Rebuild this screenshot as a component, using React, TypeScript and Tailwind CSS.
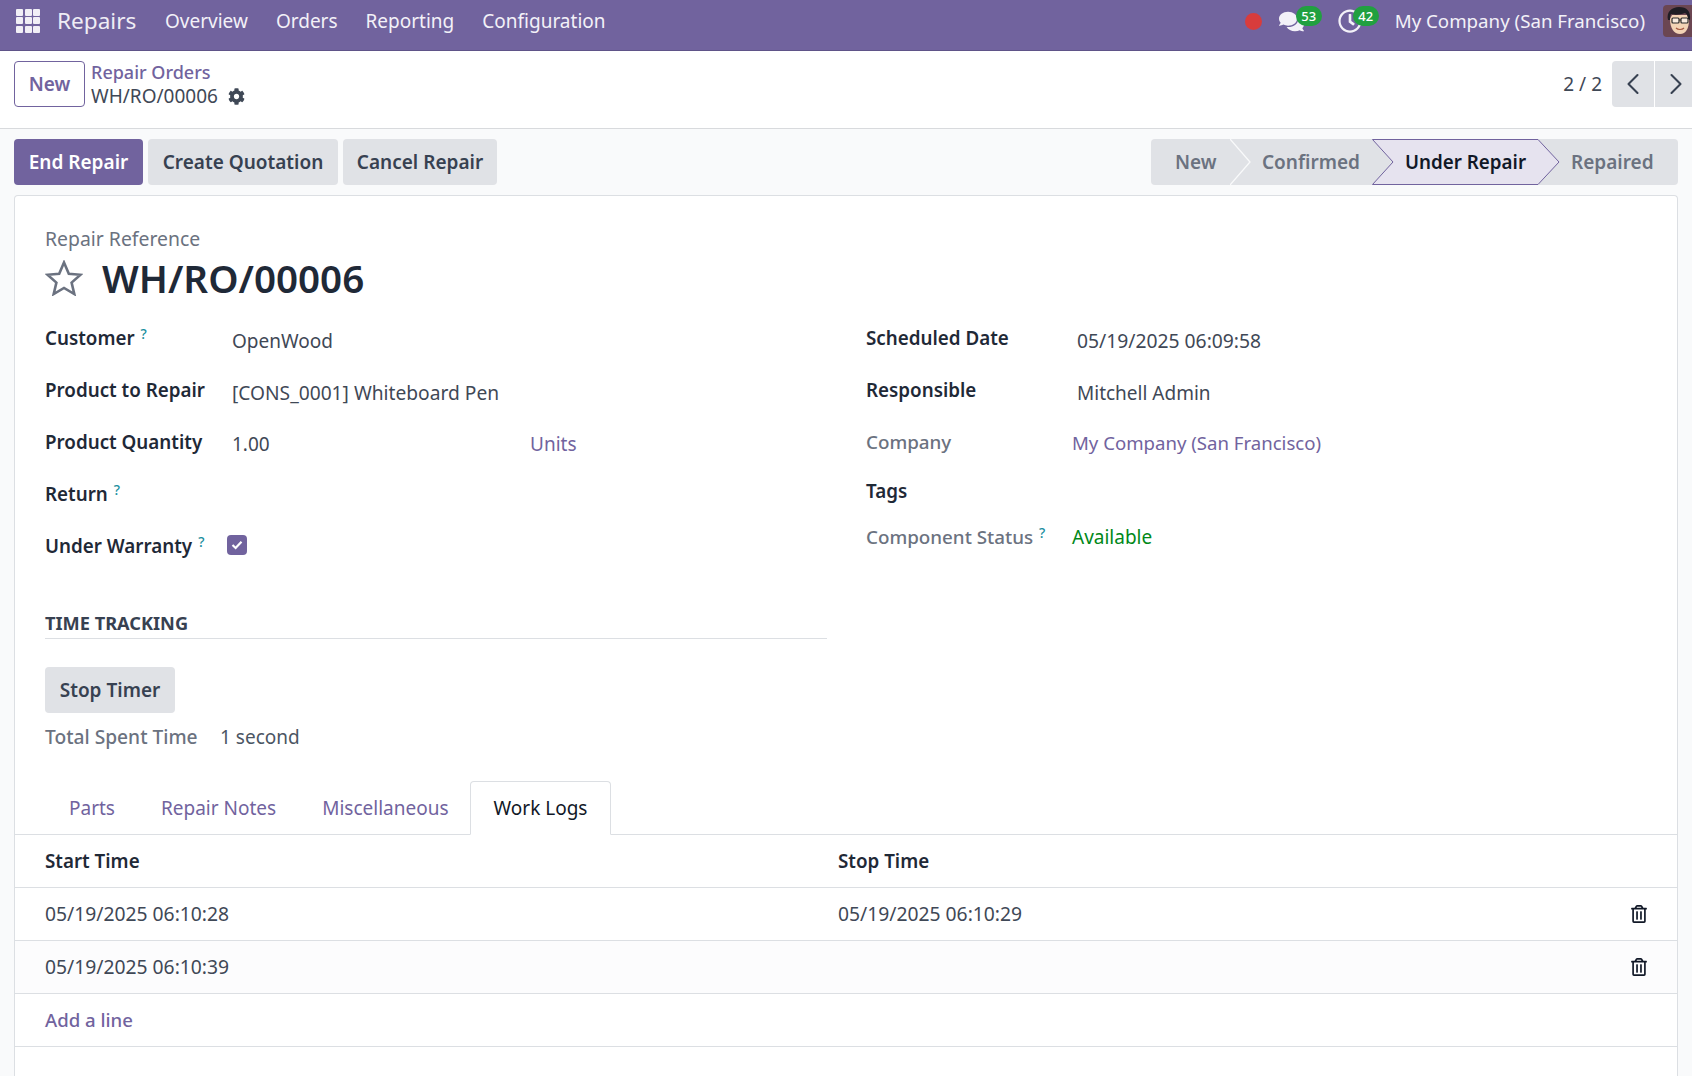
import type { ReactNode } from "react";
import { FaCog, FaComments, FaRegClock, FaRegTrashAlt } from "react-icons/fa";
import { ChevronLeft, ChevronRight } from "lucide-react";

function Help() {
  return <sup className="ml-[6px] text-[14px] font-medium text-[#1b8fa0] leading-none relative -top-[6px] align-baseline">?</sup>;
}

function Apps() {
  return (
    <div className="grid grid-cols-3 gap-[1.5px] w-[24px] h-[24px]">
      {Array.from({ length: 9 }).map((_, i) => (
        <div key={i} className="bg-[#f1eff6] rounded-[1px]" />
      ))}
    </div>
  );
}

function Avatar() {
  return (
    <svg width="32" height="32" viewBox="0 0 32 32" className="rounded-[4px] shrink-0">
      <rect width="32" height="32" fill="#6b4652" />
      <path d="M7 14c0 9 4 15 10 15s9-6 9-14l-2-5H9z" fill="#f3d3b5" />
      <path d="M5 15C3 7 9 2 16 2c8 0 12 4 11 13l-2-1c0-3-1-5-3-6-5 2-11 2-14 1-1 2-1 4-1 6z" fill="#1f1d24" />
      <rect x="9" y="13" width="7" height="5" rx="1" fill="#fff" fillOpacity=".55" stroke="#2a2a2a" strokeWidth="1.2" />
      <rect x="18" y="13" width="7" height="5" rx="1" fill="#fff" fillOpacity=".55" stroke="#2a2a2a" strokeWidth="1.2" />
      <path d="M16 15h2" stroke="#2a2a2a" strokeWidth="1.2" />
      <path d="M13 23c2 2 6 2 8 0" stroke="#a5573f" strokeWidth="1.2" fill="none" />
    </svg>
  );
}

function Badge({ n, cls }: { n: string; cls: string }) {
  return (
    <span className={`absolute ${cls} h-[20px] w-[26px] rounded-full bg-[#21a040] text-white text-[13px] leading-[20px] text-center font-medium`}>{n}</span>
  );
}

function NavBar() {
  return (
    <header className="h-[51px] bg-[#71639e] border-b border-[#5f5488] flex items-center justify-between pl-[16px] pb-[8px] text-[#f3f1f8] overflow-hidden shrink-0">
      <div className="flex items-center">
        <Apps />
        <span className="ml-[17px] text-[22.6px] text-[#efedf5] w-[108px]">Repairs</span>
        <nav className="flex items-center gap-[28px] text-[19px]">
          <span>Overview</span>
          <span>Orders</span>
          <span>Reporting</span>
          <span>Configuration</span>
        </nav>
      </div>
      <div className="flex items-center -mr-[3px]">
        <span className="w-[17px] h-[17px] rounded-full bg-[#d83c3c]" />
        <span className="relative ml-[17px] w-[28px] h-[28px] flex items-center">
          <FaComments className="text-[25px] text-[#f3f1f8]" />
          <Badge n="53" cls="left-[17px] -top-[1px]" />
        </span>
        <span className="relative ml-[31px] w-[26px] h-[28px] flex items-center">
          <FaRegClock className="text-[24px] text-[#f3f1f8]" />
          <Badge n="42" cls="left-[15px] -top-[1px]" />
        </span>
        <span className="ml-[31px] text-[18.7px] whitespace-nowrap">My Company (San Francisco)</span>
        <span className="ml-[18px]"><Avatar /></span>
      </div>
    </header>
  );
}

function ControlPanel() {
  return (
    <div className="h-[78px] bg-white border-b border-[#d8dadd] flex items-center justify-between pl-[14px] pb-[11px] shrink-0 overflow-hidden">
      <div className="flex items-center">
        <button className="w-[71px] h-[46px] rounded-[4px] border border-[#71639e] text-[#71639e] text-[19px] font-semibold bg-white">New</button>
        <div className="ml-[6px] flex flex-col text-[19px] leading-[24px]">
          <span className="text-[#71639e] font-medium text-[18px]">Repair Orders</span>
          <span className="flex items-center text-[#3f4856]">
            WH/RO/00006
            <FaCog className="ml-[10px] text-[17px] text-[#3f4856]" />
          </span>
        </div>
      </div>
      <div className="flex items-center -mr-[4px]">
        <span className="text-[19px] text-[#3f4856] mr-[10px]">2 / 2</span>
        <button className="w-[42px] h-[46px] bg-[#e0e2e6] rounded-l-[4px] flex items-center justify-center text-[#374151]"><ChevronLeft size={36} strokeWidth={1.4} /></button>
        <button className="ml-[1px] w-[41px] h-[46px] bg-[#e0e2e6] flex items-center justify-center text-[#374151]"><ChevronRight size={36} strokeWidth={1.4} /></button>
      </div>
    </div>
  );
}

function ActionBar() {
  const b = "h-[46px] rounded-[4px] text-[19px] font-semibold";
  return (
    <div className="mt-[10px] flex items-center justify-between">
      <div className="flex gap-[5px]">
        <button className={`${b} w-[129px] bg-[#71639e] text-white`}>End Repair</button>
        <button className={`${b} w-[190px] bg-[#e0e2e6] text-[#374151]`}>Create Quotation</button>
        <button className={`${b} w-[154px] bg-[#e0e2e6] text-[#374151]`}>Cancel Repair</button>
      </div>
      <div className="flex h-[46px] w-[527px] rounded-[4px] bg-[#e0e2e6] text-[19px] font-semibold text-[#6b7280]">
        <div className="relative w-[79px] pl-[24px] flex items-center">
          New
          <svg className="absolute left-[79px] top-0" width="22" height="46" viewBox="0 0 22 46" fill="none"><path d="M0 0 L20 23 L0 46" stroke="#f9fafb" strokeWidth="1.3" /></svg>
        </div>
        <div className="w-[142px] pl-[32px] flex items-center">Confirmed</div>
        <div className="relative w-[166px] pl-[33px] flex items-center text-[#111827]">
          <svg className="absolute left-0 top-0" width="188" height="46" viewBox="0 0 188 46" fill="none">
            <path d="M0.5 0.5 H166 L187 23 L166 45.5 H0.5 L21 23 Z" fill="#e6e3ef" stroke="#71639e" strokeWidth="1" />
          </svg>
          <span className="relative text-[18.8px]">Under Repair</span>
        </div>
        <div className="pl-[33px] flex items-center">Repaired</div>
      </div>
    </div>
  );
}

function Label({ children, muted, w }: { children: ReactNode; muted?: boolean; w: string }) {
  return <div className={`${w} shrink-0 text-[18.8px] ${muted ? "font-medium text-[#6b7280]" : "font-semibold text-[#1f2937]"}`}>{children}</div>;
}

function Sheet() {
  const lw = "w-[187px]";
  const rw = "w-[206px]";
  return (
    <section className="mt-[10px] flex-1 bg-white border border-[#dcdfe3] border-b-0 rounded-t-[4px] text-[19px] leading-[24px] text-[#3f4856]">
      <div className="pl-[30px] pt-[31px]">
        <div className="text-[#6b7280] text-[19.4px]">Repair Reference</div>
        <div className="mt-[3px] flex items-center h-[48px]">
          <svg width="38" height="36" viewBox="0 0 38 36" fill="none" className="shrink-0">
            <path d="M19 2.5 L23.8 13.8 L35.5 14.8 L26.6 22.6 L29.3 34 L19 27.9 L8.7 34 L11.4 22.6 L2.5 14.8 L14.2 13.8 Z" stroke="#6b7280" strokeWidth="2.6" strokeLinejoin="miter" />
          </svg>
          <h1 className="ml-[19px] text-[38.6px] leading-[48px] font-semibold text-[#1f2937]">WH/RO/00006</h1>
        </div>
        <div className="mt-[24px] grid grid-cols-[782px_1fr] gap-x-[39px]">
          <div>
            <div className="h-[52px] flex items-start"><Label w={lw}>Customer<Help /></Label><span className="mt-[3px]">OpenWood</span></div>
            <div className="h-[52px] flex items-start"><Label w={lw}>Product to Repair</Label><span className="mt-[3px] text-[19.2px]">[CONS_0001] Whiteboard Pen</span></div>
            <div className="h-[52px] flex items-start">
              <Label w={lw}>Product Quantity</Label>
              <span className="mt-[2px] w-[298px]">1.00</span>
              <span className="mt-[2px] text-[#71639e]">Units</span>
            </div>
            <div className="h-[52px] flex items-start"><Label w={lw}>Return<Help /></Label></div>
            <div className="h-[51px] flex items-start">
              <Label w="w-[182px]">Under Warranty<Help /></Label>
              <span className="mt-[1px] w-[20px] h-[20px] rounded-[4px] bg-[#71639e] flex items-center justify-center">
                <svg width="12" height="10" viewBox="0 0 12 10" fill="none"><path d="M1.5 5 L4.6 8 L10.5 1.8" stroke="#fff" strokeWidth="2.2" /></svg>
              </span>
            </div>
            <div className="mt-[26px] h-[28px] border-b border-[#dcdfe3] text-[#374151] font-bold text-[18.2px] leading-[24px]">TIME TRACKING</div>
            <button className="mt-[28px] w-[130px] h-[46px] rounded-[4px] bg-[#e0e2e6] font-semibold text-[#374151]">Stop Timer</button>
            <div className="mt-[12px] flex font-medium"><span className="w-[175px] text-[#6b7280] text-[19.2px]">Total Spent Time</span><span className="font-normal text-[#4b5563]">1 second</span></div>
          </div>
          <div>
            <div className="h-[52px] flex items-start"><Label w={rw}>Scheduled Date</Label><span className="mt-[3px] ml-[5px] text-[19.3px]">05/19/2025 06:09:58</span></div>
            <div className="h-[52px] flex items-start"><Label w={rw}>Responsible</Label><span className="mt-[3px] ml-[5px]">Mitchell Admin</span></div>
            <div className="h-[49px] flex items-start"><Label muted w={rw}>Company</Label><span className="mt-[1px] text-[18.6px] text-[#71639e]">My Company (San Francisco)</span></div>
            <div className="h-[45px] flex items-start"><Label w={rw}>Tags</Label></div>
            <div className="h-[30px] flex items-start pt-[1px]"><Label muted w={rw}>Component Status<Help /></Label><span className="text-[#008818]">Available</span></div>
          </div>
        </div>
      </div>
      <div className="mt-[32px] h-[54px] border-b border-[#dcdfe3] pl-[31px] flex items-end">
        <div className="flex items-center h-[53px] text-[#71639e] gap-[46px] w-[432px] -ml-[8px] pl-[31px]">
          <span>Parts</span><span>Repair Notes</span><span>Miscellaneous</span>
        </div>
        <div className="relative -mb-px h-[54px] w-[141px] border border-b-white border-[#dcdfe3] rounded-t-[4px] bg-white flex items-center justify-center text-[#111827]">Work Logs</div>
      </div>
      <div className="h-[53px] pb-[1px] border-b border-[#dcdfe3] grid grid-cols-[793px_1fr] items-center pl-[30px] font-semibold text-[#1f2937] text-[18.8px]">
        <span>Start Time</span><span>Stop Time</span>
      </div>
      <div className="h-[53px] pb-[1px] border-b border-[#dcdfe3] grid grid-cols-[793px_1fr_auto] items-center pl-[30px] pr-[29px] text-[19.3px]">
        <span>05/19/2025 06:10:28</span><span>05/19/2025 06:10:29</span><FaRegTrashAlt className="text-[18px] text-[#111827]" />
      </div>
      <div className="h-[53px] pb-[1px] border-b border-[#dcdfe3] bg-[#fcfcfd] grid grid-cols-[793px_1fr_auto] items-center pl-[30px] pr-[29px] text-[19.3px]">
        <span>05/19/2025 06:10:39</span><span /><FaRegTrashAlt className="text-[18px] text-[#111827]" />
      </div>
      <div className="h-[53px] pb-[1px] border-b border-[#dcdfe3] flex items-center pl-[30px] text-[#71639e] font-medium text-[18.6px]">Add a line</div>
    </section>
  );
}

export default function App() {
  return (
    <div className="h-[1076px] w-[1692px] overflow-hidden flex flex-col bg-[#f9fafb]" style={{ fontFamily: '"Noto Sans", sans-serif' }}>
      <NavBar />
      <ControlPanel />
      <main className="flex-1 flex flex-col px-[14px] min-h-0">
        <ActionBar />
        <Sheet />
      </main>
    </div>
  );
}
